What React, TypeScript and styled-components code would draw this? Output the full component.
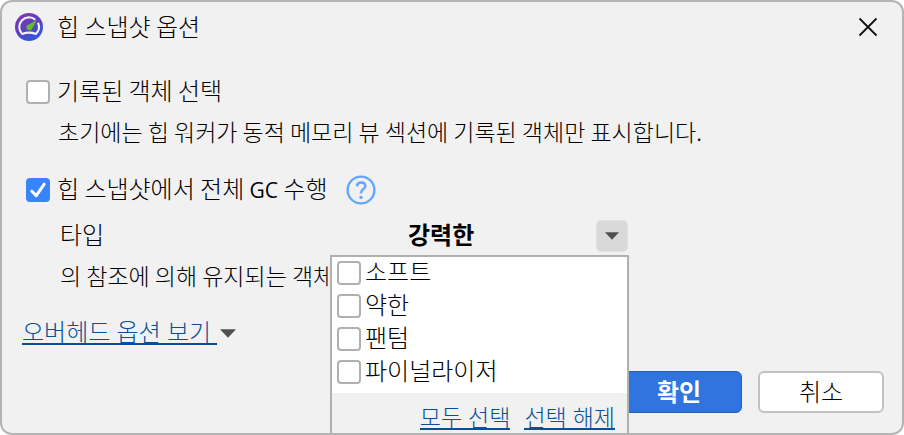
import React, { useState } from "react";
import type { ReactNode } from "react";
import styled, { createGlobalStyle, css } from "styled-components";

const GlobalStyle = createGlobalStyle`
  *, *::before, *::after { box-sizing: border-box; }
  body { margin: 0; background: #fff; }
  body, button, input {
    font-family: "Noto Sans CJK KR", "Open Sans", sans-serif;
    font-weight: 300;
    color: #000;
  }
`;

const Dialog = styled.main`
  display: flex;
  flex-direction: column;
  min-height: 100vh;
  border: 2px solid #b4b4b4;
  border-radius: 12px;
  background: #f1f1f1;
  font-size: 24px;
  line-height: 32px;
  white-space: nowrap;
  overflow: hidden;
`;

const TitleBar = styled.header`
  display: flex;
  align-items: center;
  gap: 14px;
  height: 50px;
  padding: 0 24px 0 13px;
`;

const Title = styled.h1`
  flex: 1;
  margin: 0;
  padding-bottom: 2px;
  font-size: 24px;
  line-height: 32px;
  font-weight: inherit;
`;

const IconButton = styled.button`
  display: flex;
  padding: 0;
  border: 0;
  background: none;
  cursor: pointer;
`;

const Content = styled.section`
  display: flex;
  flex-direction: column;
  flex: 1;
  padding: 22px 18px 20px 24px;
`;

const OptionRow = styled.div<{ $spaced?: boolean }>`
  display: flex;
  align-items: center;
  gap: 18px;
  height: 36px;
  margin-top: ${(p) => (p.$spaced ? 23 : 0)}px;
`;

const CheckLabel = styled.label<{ $gap: number }>`
  display: flex;
  align-items: center;
  gap: ${(p) => p.$gap}px;
`;

const LabelText = styled.span`
  padding-bottom: 4px;
  line-height: 28px;
`;

const Latin = styled.span`
  font-family: "Open Sans", sans-serif;
  font-size: 21px;
  font-weight: 400;
  line-height: 1;
`;

const BoxWrap = styled.span`
  display: grid;
  width: 24px;
  height: 24px;

  & > * { grid-area: 1 / 1; }
`;

const Box = styled.input`
  appearance: none;
  width: 24px;
  height: 24px;
  margin: 0;
  border: 2px solid #b0b0b0;
  border-radius: 4px;
  background: #fff;

  &:checked {
    border-color: #3884fb;
    background: #3884fb;
  }
`;

const CheckMark = styled.svg`
  pointer-events: none;
`;

const Note = styled.p`
  margin: 3px 0 0 32px;
  font-size: 23px;
  line-height: 36px;
`;

const TypeRow = styled.div`
  display: flex;
  align-items: center;
  margin: 10px 0 0 34px;
  height: 36px;
`;

const TypeLabel = styled.span`
  width: 270px;
  padding-bottom: 4px;
`;

const Picker = styled.div`
  position: relative;
  display: flex;
  align-items: center;
  justify-content: space-between;
  width: 299px;
  height: 36px;
  padding: 0 1px 0 78px;
`;

const PickerValue = styled.strong`
  padding-bottom: 4px;
  font-weight: 700;
`;

const DropButton = styled.button`
  display: grid;
  place-items: center;
  width: 32px;
  height: 32px;
  padding: 0;
  border: 1px solid #e0e0e0;
  border-radius: 5px;
  background: #d9d9d9;
`;

const Popup = styled.div`
  position: absolute;
  top: 100%;
  left: 0;
  width: 100%;
  z-index: 1;
  margin-top: 1px;
  border: 2px solid #b0b0b0;
  border-bottom: 0;
  background: #fff;
`;

const PopupList = styled.ul`
  margin: 0;
  padding: 0 0 4px 5px;
  list-style: none;
`;

const PopupItem = styled.li`
  display: flex;
  align-items: flex-start;
  height: 33px;
`;

const PopupFooter = styled.div`
  display: flex;
  align-items: center;
  justify-content: flex-end;
  gap: 14px;
  height: 44px;
  padding: 6px 12px 0;
  background: #f1f1f1;
  font-size: 23px;
`;

const Link = styled.a`
  border-bottom: 2px solid #084f97;
  color: #084f97;
  font-family: "Open Sans", "Noto Sans CJK KR", sans-serif;
  line-height: 22px;
  text-decoration: none;
  white-space: pre;
`;

const MoreRow = styled.div`
  display: flex;
  align-items: center;
  gap: 3px;
  margin: 24px 0 0 -4px;
  height: 32px;
`;

const ReferenceNote = styled.p`
  margin: 3px 0 0 34px;
  font-size: 23px;
  line-height: 36px;
`;

const Actions = styled.footer`
  display: flex;
  justify-content: flex-end;
  gap: 16px;
  margin-top: auto;
`;

const ActionButton = styled.button<{ $primary?: boolean }>`
  width: 126px;
  height: 42px;
  padding: 0 0 2px;
  border: 2px solid #c2c2c2;
  border-radius: 6px;
  background: #fff;
  font-size: 24px;
  line-height: 32px;
  ${(p) =>
    p.$primary &&
    css`
      border: 1px solid #2862bb;
      background: #3074e0;
      color: #fff;
      font-weight: 700;
    `}
`;

function GaugeLogo() {
  return (
    <svg width="28" height="28" viewBox="0 0 28 28" aria-hidden="true">
      <defs>
        <linearGradient id="logoFill" x1="0.25" y1="0" x2="0.75" y2="1">
          <stop offset="0" stopColor="#8036b0" />
          <stop offset="0.5" stopColor="#5843c2" />
          <stop offset="1" stopColor="#2b5be2" />
        </linearGradient>
      </defs>
      <circle cx="14" cy="14" r="14" fill="url(#logoFill)" />
      <path
        d="M20.3 6.7A9.7 9.7 0 0 0 7.2 21Q14 18.2 20.8 21A9.7 9.7 0 0 0 23 9.8"
        fill="none"
        stroke="#f3effb"
        strokeWidth="2.1"
        strokeLinejoin="round"
      />
      <path d="M21.8 7.2 17.2 15.4A3 3 0 1 1 12.3 12.2Z" fill="#66bd27" />
    </svg>
  );
}

function Triangle({ width, height, color }: { width: number; height: number; color: string }) {
  return (
    <svg width={width} height={height} viewBox="0 0 16 9" aria-hidden="true">
      <path d="M0 0.3H16L8 8.7Z" fill={color} />
    </svg>
  );
}

function HelpIcon() {
  return (
    <svg width="30" height="30" viewBox="0 0 30 30" fill="none" stroke="#64a6fb" aria-hidden="true">
      <circle cx="15" cy="15" r="13.4" strokeWidth="2.4" />
      <path
        d="M10.9 11.4C11.1 8.8 12.7 7.4 15.2 7.4S19.3 8.9 19.3 11.2C19.3 14.2 15 14.4 15 17.6V18.6"
        strokeWidth="2.5"
      />
      <circle cx="15" cy="22.4" r="1.7" fill="#64a6fb" stroke="none" />
    </svg>
  );
}

interface CheckProps {
  children: ReactNode;
  initial?: boolean;
  gap?: number;
}

function Check({ children, initial = false, gap = 7 }: CheckProps) {
  const [checked, setChecked] = useState(initial);
  return (
    <CheckLabel $gap={gap}>
      <BoxWrap>
        <Box type="checkbox" checked={checked} onChange={(e) => setChecked(e.target.checked)} />
        {checked && (
          <CheckMark width="24" height="24" viewBox="0 0 24 24" aria-hidden="true">
            <path
              d="M5.8 13.2 10.3 17.6 18.2 6.2"
              fill="none"
              stroke="#fff"
              strokeWidth="3"
              strokeLinecap="round"
              strokeLinejoin="round"
            />
          </CheckMark>
        )}
      </BoxWrap>
      <LabelText>{children}</LabelText>
    </CheckLabel>
  );
}

const TYPES = ["소프트", "약한", "팬텀", "파이널라이저"];

export default function App() {
  return (
    <>
      <GlobalStyle />
      <Dialog>
        <TitleBar>
          <GaugeLogo />
          <Title>힙 스냅샷 옵션</Title>
          <IconButton type="button" aria-label="닫기">
            <svg width="20" height="20" viewBox="0 0 20 20" aria-hidden="true">
              <path d="M1.5 1.5 18.5 18.5M18.5 1.5 1.5 18.5" stroke="#111" strokeWidth="1.8" />
            </svg>
          </IconButton>
        </TitleBar>
        <Content>
          <OptionRow>
            <Check>기록된 객체 선택</Check>
          </OptionRow>
          <Note>초기에는 힙 워커가 동적 메모리 뷰 섹션에 기록된 객체만 표시합니다.</Note>
          <OptionRow $spaced>
            <Check initial>
              힙 스냅샷에서 전체 <Latin>GC</Latin> 수행
            </Check>
            <IconButton type="button" aria-label="도움말">
              <HelpIcon />
            </IconButton>
          </OptionRow>
          <TypeRow>
            <TypeLabel id="type-label">타입</TypeLabel>
            <Picker>
              <PickerValue>강력한</PickerValue>
              <DropButton type="button" aria-labelledby="type-label" aria-expanded="true">
                <Triangle width={14} height={8} color="#505050" />
              </DropButton>
              <Popup>
                <PopupList>
                  {TYPES.map((type) => (
                    <PopupItem key={type}>
                      <Check gap={4}>{type}</Check>
                    </PopupItem>
                  ))}
                </PopupList>
                <PopupFooter>
                  <Link href="#all">모두 선택</Link>
                  <Link href="#none">선택 해제</Link>
                </PopupFooter>
              </Popup>
            </Picker>
          </TypeRow>
          <ReferenceNote>의 참조에 의해 유지되는 객체</ReferenceNote>
          <MoreRow>
            <Link href="#overhead">오버헤드 옵션 보기 </Link>
            <Triangle width={16} height={9} color="#505050" />
          </MoreRow>
          <Actions>
            <ActionButton type="button" $primary>
              확인
            </ActionButton>
            <ActionButton type="button">취소</ActionButton>
          </Actions>
        </Content>
      </Dialog>
    </>
  );
}
